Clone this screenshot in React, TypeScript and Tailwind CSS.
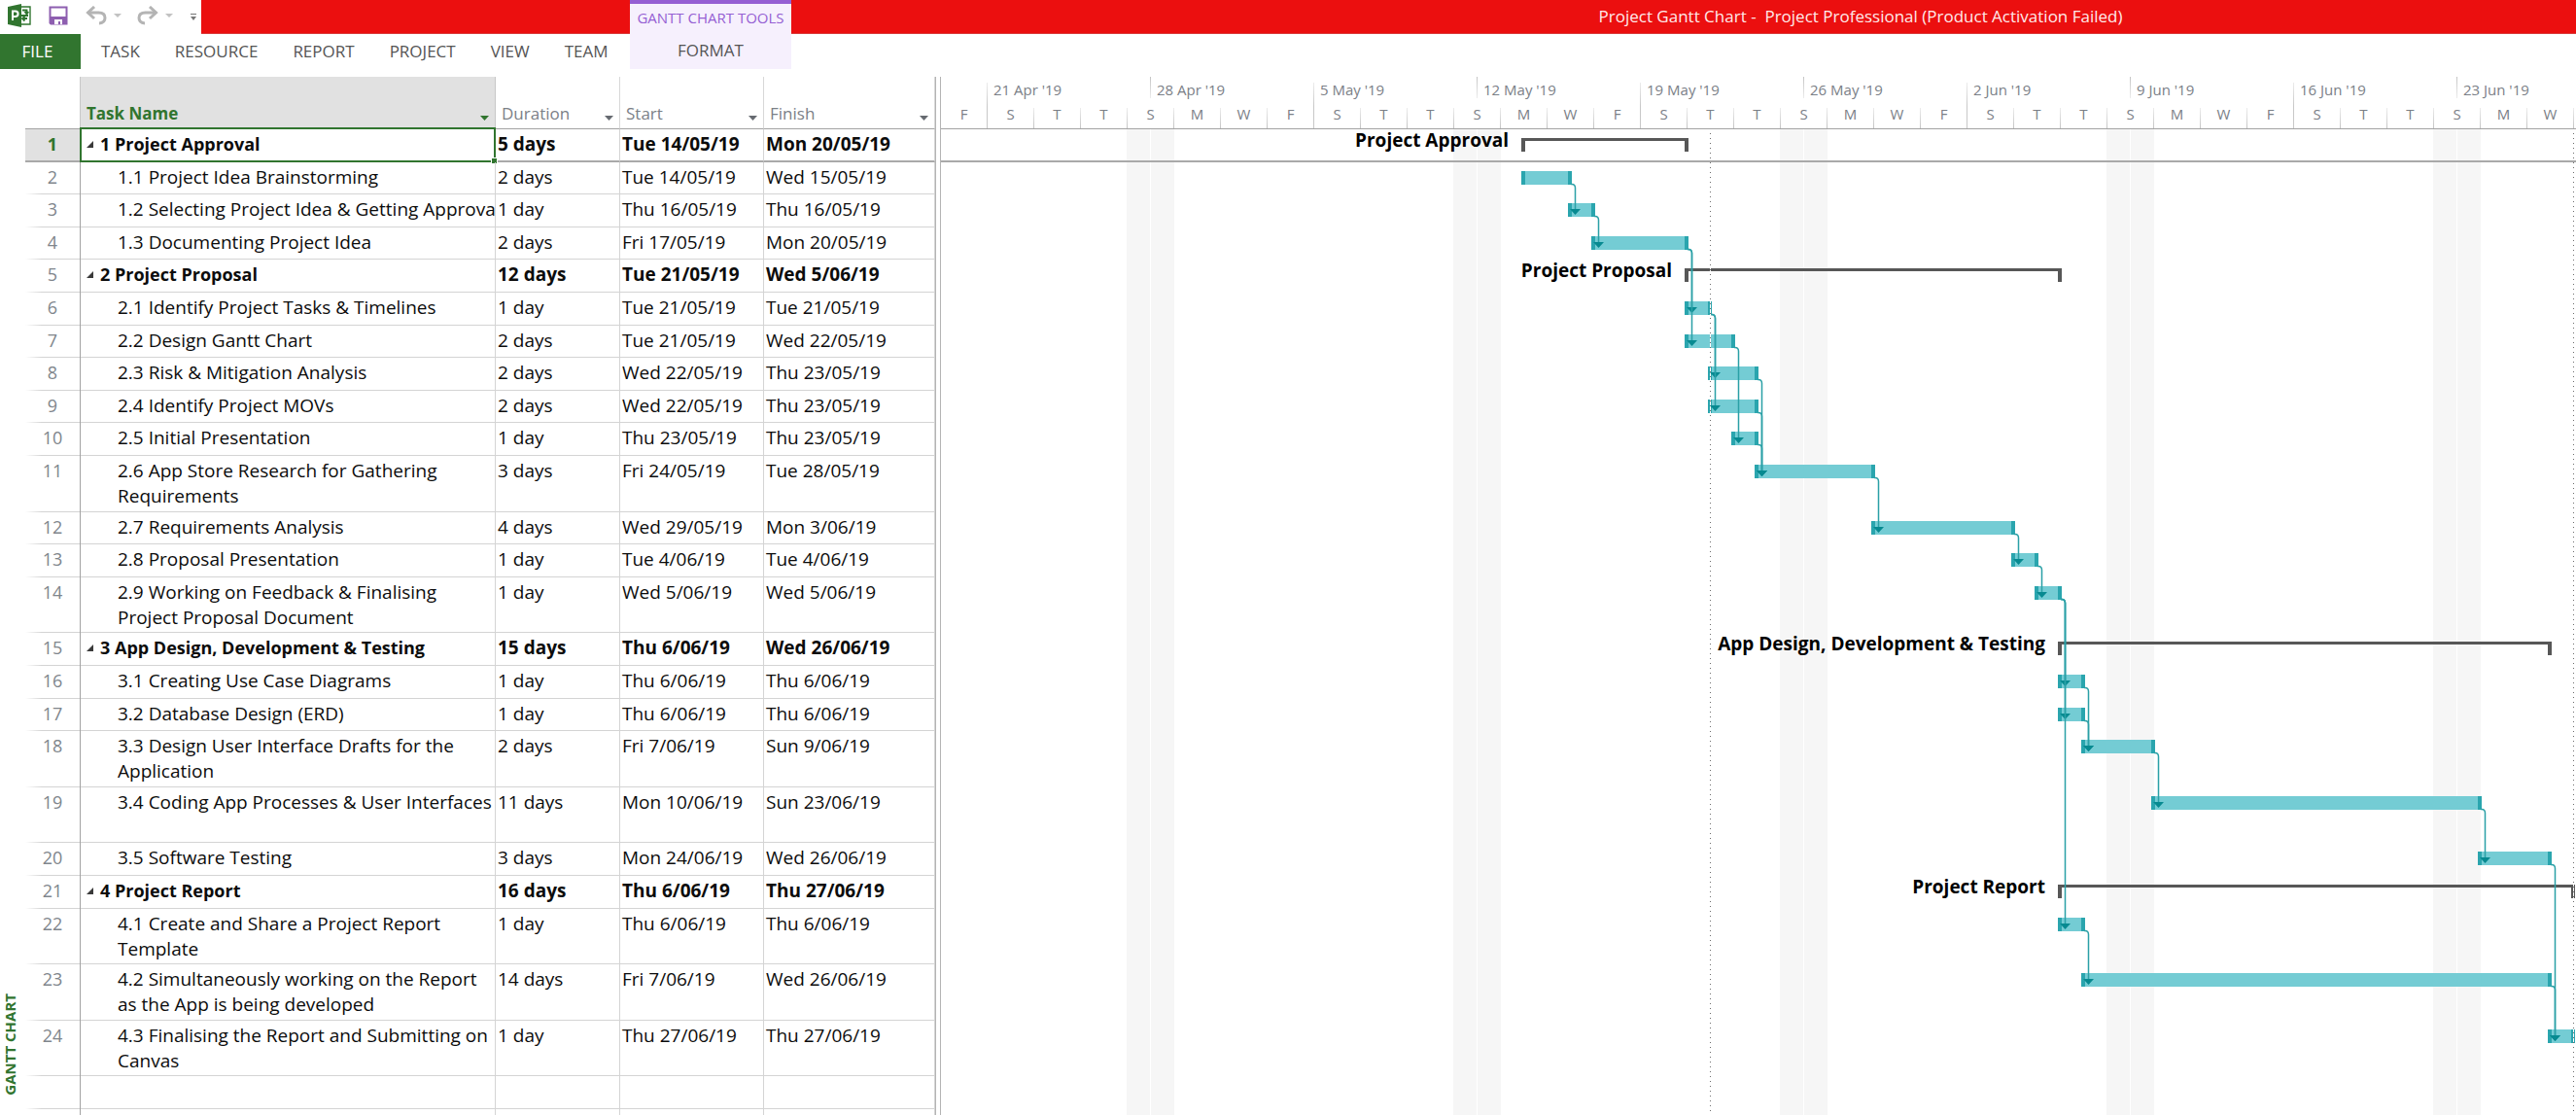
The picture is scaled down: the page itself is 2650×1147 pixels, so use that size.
import React from 'react';

type Task = {
  name: string;
  duration: string;
  start: string;
  finish: string;
  from: number;
  to: number;
  summary?: boolean;
  tall?: boolean;
  clip?: boolean;
};

/* `from` and `to` are day offsets from Fri 19 April 2019. */
const TASKS: Task[] = [
  { name: '1 Project Approval', duration: '5 days', start: 'Tue 14/05/19', finish: 'Mon 20/05/19', from: 25, to: 32, summary: true },
  { name: '1.1 Project Idea Brainstorming', duration: '2 days', start: 'Tue 14/05/19', finish: 'Wed 15/05/19', from: 25, to: 27 },
  { name: '1.2 Selecting Project Idea & Getting Approval', duration: '1 day', start: 'Thu 16/05/19', finish: 'Thu 16/05/19', from: 27, to: 28, clip: true },
  { name: '1.3 Documenting Project Idea', duration: '2 days', start: 'Fri 17/05/19', finish: 'Mon 20/05/19', from: 28, to: 32 },
  { name: '2 Project Proposal', duration: '12 days', start: 'Tue 21/05/19', finish: 'Wed 5/06/19', from: 32, to: 48, summary: true },
  { name: '2.1 Identify Project Tasks & Timelines', duration: '1 day', start: 'Tue 21/05/19', finish: 'Tue 21/05/19', from: 32, to: 33 },
  { name: '2.2 Design Gantt Chart', duration: '2 days', start: 'Tue 21/05/19', finish: 'Wed 22/05/19', from: 32, to: 34 },
  { name: '2.3 Risk & Mitigation Analysis', duration: '2 days', start: 'Wed 22/05/19', finish: 'Thu 23/05/19', from: 33, to: 35 },
  { name: '2.4 Identify Project MOVs', duration: '2 days', start: 'Wed 22/05/19', finish: 'Thu 23/05/19', from: 33, to: 35 },
  { name: '2.5 Initial Presentation', duration: '1 day', start: 'Thu 23/05/19', finish: 'Thu 23/05/19', from: 34, to: 35 },
  { name: '2.6 App Store Research for Gathering Requirements', duration: '3 days', start: 'Fri 24/05/19', finish: 'Tue 28/05/19', from: 35, to: 40, tall: true },
  { name: '2.7 Requirements Analysis', duration: '4 days', start: 'Wed 29/05/19', finish: 'Mon 3/06/19', from: 40, to: 46 },
  { name: '2.8 Proposal Presentation', duration: '1 day', start: 'Tue 4/06/19', finish: 'Tue 4/06/19', from: 46, to: 47 },
  { name: '2.9 Working on Feedback & Finalising Project Proposal Document', duration: '1 day', start: 'Wed 5/06/19', finish: 'Wed 5/06/19', from: 47, to: 48, tall: true },
  { name: '3 App Design, Development & Testing', duration: '15 days', start: 'Thu 6/06/19', finish: 'Wed 26/06/19', from: 48, to: 69, summary: true },
  { name: '3.1 Creating Use Case Diagrams', duration: '1 day', start: 'Thu 6/06/19', finish: 'Thu 6/06/19', from: 48, to: 49 },
  { name: '3.2 Database Design (ERD)', duration: '1 day', start: 'Thu 6/06/19', finish: 'Thu 6/06/19', from: 48, to: 49 },
  { name: '3.3 Design User Interface Drafts for the Application', duration: '2 days', start: 'Fri 7/06/19', finish: 'Sun 9/06/19', from: 49, to: 52, tall: true },
  { name: '3.4 Coding App Processes & User Interfaces', duration: '11 days', start: 'Mon 10/06/19', finish: 'Sun 23/06/19', from: 52, to: 66, tall: true },
  { name: '3.5 Software Testing', duration: '3 days', start: 'Mon 24/06/19', finish: 'Wed 26/06/19', from: 66, to: 69 },
  { name: '4 Project Report', duration: '16 days', start: 'Thu 6/06/19', finish: 'Thu 27/06/19', from: 48, to: 70, summary: true },
  { name: '4.1 Create and Share a Project Report Template', duration: '1 day', start: 'Thu 6/06/19', finish: 'Thu 6/06/19', from: 48, to: 49, tall: true },
  { name: '4.2 Simultaneously working on the Report as the App is being developed', duration: '14 days', start: 'Fri 7/06/19', finish: 'Wed 26/06/19', from: 49, to: 69, tall: true },
  { name: '4.3 Finalising the Report and Submitting on Canvas', duration: '1 day', start: 'Thu 27/06/19', finish: 'Thu 27/06/19', from: 69, to: 70, tall: true },
];

/* Finish-to-start dependencies as row numbers. */
const LINKS: [number, number][] = [
  [2, 3], [3, 4], [4, 6], [4, 7], [6, 8], [6, 9], [7, 10], [8, 11], [9, 11], [10, 11],
  [11, 12], [12, 13], [13, 14], [14, 16], [14, 17], [14, 22], [16, 18], [17, 18],
  [18, 19], [19, 20], [20, 24], [22, 23], [23, 24],
];

const DAY = 24;
const UNIT = 4.8;

/* Row edges: a single-line row is 7 units tall, a two-line row 12. */
const EDGES: number[] = [0];
let units = 0;
[...TASKS.map((t) => (t.tall ? 12 : 7)), 7, 7].forEach((u) => {
  units += u;
  EDGES.push(Math.round(units * UNIT));
});
const rowHeight = (i: number) => EDGES[i + 1] - EDGES[i];

const MONTHS = ['Jan', 'Feb', 'Mar', 'Apr', 'May', 'Jun'];
const dateAt = (offset: number) => new Date(Date.UTC(2019, 3, 19 + offset));
const WEEKS = Array.from({ length: 10 }, (_, i) => {
  const d = dateAt(2 + i * 7);
  return `${d.getUTCDate()} ${MONTHS[d.getUTCMonth()]} '19`;
});
const TICKS = Array.from({ length: 35 }, (_, i) => 'SMTWTFS'[dateAt(i * 2).getUTCDay()]);

function ProjectLogo() {
  return (
    <svg className="size-6" viewBox="0 0 24 24" aria-hidden="true">
      <path d="M12 3h11v18H12z" fill="#fff" stroke="#31752f" strokeWidth="1.4" />
      <path d="M15 6.5h4.5v3M21.300 8l-1.800 2.500L17.500 8M14 12h7M20 15h-4.500M17.500 13l-2.500 2 2.500 2.500" fill="none" stroke="#31752f" strokeWidth="1.800" />
      <path d="M0 3 14 0v24L0 21z" fill="#31752f" />
      <path d="M5 17V7.500h2.800a2.700 2.700 0 0 1 0 5.500H5" fill="none" stroke="#fff" strokeWidth="2" />
    </svg>
  );
}

function SaveIcon() {
  return (
    <svg className="size-5" viewBox="0 0 20 20" aria-hidden="true">
      <path d="M1.500 1.500h17v17h-16l-1-1z" fill="#fff" stroke="#8e5fb0" strokeWidth="2" />
      <path d="M1 11h18v8H2l-1-1z" fill="#8e5fb0" />
      <path d="M6 14h8v5h-2v-3h-2v3H6z" fill="#fff" />
    </svg>
  );
}

function UndoIcon({ flip = false }: { flip?: boolean }) {
  return (
    <svg className={flip ? 'h-5 w-[22px] -scale-x-100' : 'h-5 w-[22px]'} viewBox="0 0 22 20" aria-hidden="true">
      <path d="M2 7h11.500c4 0 6.500 2 6.500 5.300 0 3.500-2.500 5.500-6 5.700" fill="none" stroke="#b4b4b4" strokeWidth="3" />
      <path d="M9 1 2.500 7 9 13" fill="none" stroke="#b4b4b4" strokeWidth="3" />
    </svg>
  );
}

function Caret({ className }: { className: string }) {
  return (
    <svg className={className} viewBox="0 0 10 6" preserveAspectRatio="none" aria-hidden="true">
      <path d="M0 0h10L5 6z" fill="currentColor" />
    </svg>
  );
}

function QuickAccess() {
  return (
    <div className="flex w-[207px] shrink-0 items-center bg-white pb-1 pl-2">
      <ProjectLogo />
      <button type="button" aria-label="Save" className="ml-[18px]"><SaveIcon /></button>
      <button type="button" aria-label="Undo" className="ml-[18px]"><UndoIcon /></button>
      <button type="button" aria-label="Undo history" className="ml-[7px] text-[#c2c2c2]"><Caret className="h-1 w-2" /></button>
      <button type="button" aria-label="Redo" className="ml-4"><UndoIcon flip /></button>
      <button type="button" aria-label="Redo history" className="ml-[7px] text-[#c2c2c2]"><Caret className="h-1 w-2" /></button>
      <button type="button" aria-label="Customise toolbar" className="ml-[18px] flex flex-col items-center gap-[2px] pt-1 text-[#777]">
        <span className="h-px w-[6px] bg-[#777]" />
        <Caret className="h-1 w-[6px]" />
      </button>
    </div>
  );
}

function Ribbon() {
  return (
    <header className="grid shrink-0 grid-cols-[648px_166px_1fr] grid-rows-[35px_36px]">
      <div className="flex">
        <QuickAccess />
        <div className="flex-1 border-b border-[#d93a3a] bg-[#eb0f0f]" />
      </div>
      <div className="row-span-2 flex flex-col items-center border-t-4 border-[#955fd3] bg-[#f6f0fd]">
        <span className="mt-[2px] text-[15px] leading-[24px] text-[#955fd3]">GANTT CHART TOOLS</span>
        <button type="button" className="mt-[8px] text-[17px] leading-[28px] text-[#555]">FORMAT</button>
      </div>
      <h1 className="border-b border-[#d93a3a] bg-[#eb0f0f] pl-[364px] text-center text-[17px] leading-[34px] whitespace-pre text-[#ffe9e9]">
        {'Project Gantt Chart -  Project Professional (Product Activation Failed)'}
      </h1>
      <nav className="col-start-1 row-start-2 flex text-[17px] text-[#555]">
        <button type="button" className="w-[83px] bg-[#31752f] pr-[6px] text-white">FILE</button>
        <div className="flex gap-[36px] pl-[21px]">
          {['TASK', 'RESOURCE', 'REPORT', 'PROJECT', 'VIEW', 'TEAM'].map((tab) => (
            <button key={tab} type="button">{tab}</button>
          ))}
        </div>
      </nav>
    </header>
  );
}

function ColumnHead({ label, first = false }: { label: string; first?: boolean }) {
  return (
    <th
      scope="col"
      className={
        first
          ? 'border-r border-b border-r-[#c8c8c8] border-b-[#a3a3a3] bg-[#e1e1e1] p-0 align-bottom font-bold text-[#31752f]'
          : 'border-r border-b border-r-[#d8d8d8] border-b-[#a3a3a3] p-0 align-bottom font-normal text-[#7b8087]'
      }
    >
      <button type="button" className="flex w-full items-center justify-between pr-[6px] pb-[3px] pl-[6px] text-[17px] leading-[24px]">
        {label}
        <Caret className={first ? 'mt-[8px] h-[5px] w-[9px] text-[#31752f]' : 'mt-[8px] h-[5px] w-[9px] text-[#666a70]'} />
      </button>
    </th>
  );
}

function NumberCell({ n, active = false }: { n?: number; active?: boolean }) {
  return (
    <th
      scope="row"
      className={
        active
          ? 'border-r border-b-2 border-r-[#a3a3a3] border-b-[#a9a9a9] bg-[#e1e1e1] p-0 pt-[2px] align-top text-[18px] leading-[26px] font-bold text-[#31752f]'
          : 'border-r border-r-[#a3a3a3] bg-linear-to-r from-transparent to-[#d4d4d4] to-30% bg-[length:100%_1px] bg-bottom bg-no-repeat p-0 pt-[2px] align-top text-[18px] leading-[26px] font-normal text-[#80868c]'
      }
    >
      {n}
    </th>
  );
}

function TaskRow({ task, i }: { task: Task; i: number }) {
  const active = i === 0;
  const line = active ? 'border-b-2 border-b-[#a9a9a9]' : 'border-b border-b-[#d4d4d4]';
  const weight = task.summary ? 'font-bold' : 'font-normal';
  const cell = `border-r border-r-[#d4d4d4] p-0 pt-[2px] pl-[2px] align-top text-[19px] leading-[26px] ${line} ${weight}`;
  return (
    <tr style={{ height: rowHeight(i) }}>
      <NumberCell n={i + 1} active={active} />
      <td className={`relative border-r border-r-[#d4d4d4] p-0 pt-[2px] align-top leading-[26px] ${line} ${weight}`}>
        {task.summary ? (
          <div className="flex items-center gap-[7px] pl-[6px] text-[18px]">
            <svg className="size-[7px]" viewBox="0 0 7 7" aria-hidden="true"><path d="M7 0v7H0z" fill="#3a3a3a" /></svg>
            {task.name}
          </div>
        ) : (
          <div className={task.clip ? 'overflow-hidden pl-[38px] text-[19px] whitespace-nowrap' : 'pl-[38px] text-[19px]'}>{task.name}</div>
        )}
        {active && (
          <div className="absolute -inset-x-px -top-[2px] -bottom-[2px] border-2 border-[#31752f]">
            <span className="absolute -right-[4px] -bottom-[4px] size-[7px] border border-white bg-[#31752f]" />
          </div>
        )}
      </td>
      <td className={cell}>{task.duration}</td>
      <td className={cell}>{task.start}</td>
      <td className={cell}>{task.finish}</td>
    </tr>
  );
}

function TaskTable() {
  return (
    <table className="w-[936px] shrink-0 table-fixed border-separate border-spacing-0 self-start text-left text-[#0c0c0c]">
      <colgroup>
        <col className="w-[57px]" />
        <col className="w-[427px]" />
        <col className="w-[128px]" />
        <col className="w-[148px]" />
        <col className="w-[176px]" />
      </colgroup>
      <thead>
        <tr className="h-[54px]">
          <td className="border-r border-b border-r-[#c8c8c8] border-b-[#a3a3a3]" />
          <ColumnHead label="Task Name" first />
          <ColumnHead label="Duration" />
          <ColumnHead label="Start" />
          <ColumnHead label="Finish" />
        </tr>
      </thead>
      <tbody className="[&_th]:text-center">
        {TASKS.map((t, i) => <TaskRow key={t.name} task={t} i={i} />)}
        {[24, 25].map((i) => (
          <tr key={i} style={{ height: rowHeight(i) }}>
            <NumberCell />
            <td className="border-r border-b border-[#d4d4d4]" />
            <td className="border-r border-b border-[#d4d4d4]" />
            <td className="border-r border-b border-[#d4d4d4]" />
            <td className="border-r border-b border-[#d4d4d4]" />
          </tr>
        ))}
      </tbody>
    </table>
  );
}

function Timescale() {
  return (
    <div className="flex h-[54px] shrink-0 flex-col overflow-hidden border-b border-[#a3a3a3] text-[15px] text-[#7b8087]">
      <div className="flex h-[30px] shrink-0 pl-[47px]">
        {WEEKS.map((label, i) => (
          <div key={label} className="flex w-[168px] shrink-0">
            <span className={i % 2 ? 'h-[22px] w-px bg-linear-to-b from-[#c4c4c4] to-[#ececec]' : 'mt-[6px] w-px bg-linear-to-b from-[#ececec] to-[#c8c8c8]'} />
            <span className="pt-[2px] pl-[6px] leading-[22px]">{label}</span>
          </div>
        ))}
      </div>
      <div className="flex flex-1">
        <div className="w-[47px] shrink-0 text-center leading-[16px]">{TICKS[0]}</div>
        {TICKS.slice(1).map((letter, i) => (
          <div key={i} className="flex w-12 shrink-0">
            <span className={i % 7 === 0 ? 'w-px bg-[#c8c8c8]' : 'mt-[2px] w-px bg-linear-to-b from-[#ececec] to-[#c4c4c4]'} />
            <span className="flex-1 text-center leading-[16px]">{letter}</span>
          </div>
        ))}
        <span className="mt-[2px] w-px shrink-0 bg-linear-to-b from-[#ececec] to-[#c4c4c4]" />
      </div>
    </div>
  );
}

function DateLine({ day }: { day: number }) {
  return (
    <g strokeWidth="1">
      {TASKS.map((t, i) => {
        if (day * DAY < t.from * DAY - 2 || day * DAY > t.to * DAY + 2) return null;
        return <path key={i} d={`M${day * DAY + 0.5} ${EDGES[i] + 9}v${t.summary && day < t.to ? 3 : 14}`} stroke="#fff" />;
      })}
      <path d={`M${day * DAY + 0.5} 4V1100`} stroke="#6e6e6e" strokeDasharray="1 4" />
    </g>
  );
}

function Chart() {
  return (
    <svg className="w-full flex-1 overflow-visible" role="img" aria-label="Gantt chart of project tasks">
      <g transform="translate(-1 0)">
        {[8, 22, 36, 50, 64].map((d) => (
          <g key={d} fill="#f6f6f6">
            <rect x={d * DAY} y="0" width="24" height="1100" />
            <rect x={d * DAY + 25} y="0" width="24" height="1100" />
          </g>
        ))}
        <rect x="1" y="32" width="6000" height="2" fill="#a9a9a9" />
        {TASKS.map((t, i) => {
          const y = EDGES[i] + 9;
          const x1 = t.from * DAY - 2;
          const x2 = t.to * DAY + 2;
          if (t.summary) {
            return (
              <g key={i}>
                <path d={`M${x1} ${y}H${x2}v14h-4v-11H${x1 + 4}v11h-4z`} fill="#575757" />
                <text x={x1 - 13} y={y + 9} textAnchor="end" className="fill-black text-[19px] font-bold">
                  {t.name.slice(2)}
                </text>
              </g>
            );
          }
          return (
            <g key={i}>
              <rect x={x1} y={y} width={x2 - x1} height="14" fill="#74ccd4" />
              <rect x={x1} y={y} width="4" height="14" fill="#2aa5ae" />
              <rect x={x2 - 4} y={y} width="4" height="14" fill="#2aa5ae" />
            </g>
          );
        })}
        <DateLine day={33} />
        <DateLine day={70} />
        {LINKS.map(([a, b]) => {
          const x = TASKS[a - 1].to * DAY + 5;
          const y1 = EDGES[a - 1] + 22;
          const y2 = EDGES[b - 1] + 15;
          return (
            <g key={`${a}-${b}`}>
              <path d={`M${x - 4} ${y1 + 0.5}h1q3.500 0 3.500 4V${y2}`} fill="none" stroke="#2aa0a6" strokeWidth="1.500" />
              <path d={`M${x - 5} ${y2}h11l-5.500 6z`} fill="#078a91" />
            </g>
          );
        })}
      </g>
    </svg>
  );
}

export default function App() {
  return (
    <div className="flex h-screen flex-col overflow-hidden bg-white font-['Open_Sans',sans-serif]">
      <Ribbon />
      <main className="mt-2 flex min-h-0 flex-1 overflow-hidden">
        <aside className="flex w-[26px] shrink-0 items-end pb-[20px]">
          <span className="rotate-180 text-[15px] leading-[20px] font-bold text-[#31752f] [writing-mode:vertical-rl]">GANTT CHART</span>
        </aside>
        <TaskTable />
        <div className="w-[6px] shrink-0 border-x border-[#b4b4b4] bg-white" />
        <section className="flex min-w-0 flex-1 flex-col overflow-hidden">
          <Timescale />
          <Chart />
        </section>
      </main>
    </div>
  );
}
